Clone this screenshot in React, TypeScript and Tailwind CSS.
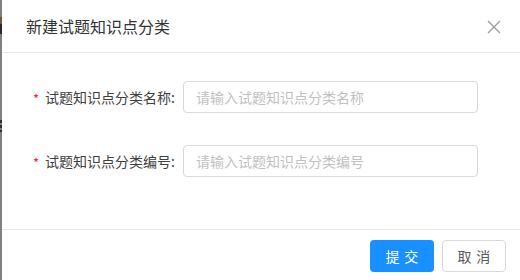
import React from "react";

export default function App() {
  const font = { fontFamily: '"Noto Sans CJK SC", "Microsoft YaHei", sans-serif' };
  return (
    <div
      className="w-[520px] h-[280px] bg-[#808080] flex overflow-hidden"
      style={font}
    >
      <div className="w-[2px] h-full flex flex-col shrink-0">
        <div className="h-[17px]" />
        <div className="h-[7px] bg-[#6b5a3c]" />
        <div className="h-[10px] bg-[#2a2a2a]" />
        <div className="h-[86px]" />
        <div className="h-[3px] bg-[#2b2f3a]" />
        <div className="h-[2px]" />
        <div className="h-[3px] bg-[#2b2f3a]" />
        <div className="h-[2px]" />
        <div className="h-[2px] bg-[#2b2f3a]" />
      </div>
      <div className="flex-1 bg-white flex flex-col">
        <div className="h-[53px] border-b border-[#e8e8e8] flex items-center justify-between pl-[24px] pr-[19px] shrink-0">
          <span className="text-[16px] text-[#333333] leading-none">新建试题知识点分类</span>
          <svg width="14" height="14" viewBox="0 0 14 14" className="mt-[1px]">
            <path d="M1 1 L13 13 M13 1 L1 13" stroke="#9a9a9a" strokeWidth="1.3" fill="none" />
          </svg>
        </div>
        <div className="h-[176px] shrink-0 pt-[28px] flex flex-col gap-[32px]">
          {[
            ["试题知识点分类名称", "请输入试题知识点分类名称"],
            ["试题知识点分类编号", "请输入试题知识点分类编号"],
          ].map(([label, ph]) => (
            <div key={label} className="flex items-center h-[32px]">
              <div className="w-[173px] flex justify-end items-center text-[14px] text-[#404040]">
                <span className="text-[#f5222d] mr-[6px] text-[13px] leading-none mt-[2px]">*</span>
                <span>{label}:</span>
              </div>
              <div className="ml-[8px] w-[295px] h-[32px] border border-[#d9d9d9] rounded-[4px] flex items-center pl-[12px] text-[14px] text-[#bfbfbf]">
                {ph}
              </div>
            </div>
          ))}
        </div>
        <div className="border-t border-[#e8e8e8] flex-1 flex justify-end items-start pt-[10px] pr-[14px] gap-[8px]">
          <button className="w-[64px] h-[32px] rounded-[4px] bg-[#1890ff] text-white text-[14px] tracking-[0.34em] pl-[0.34em]">
            提交
          </button>
          <button className="w-[64px] h-[32px] rounded-[4px] border border-[#d9d9d9] bg-white text-[#595959] text-[14px] tracking-[0.34em] pl-[0.34em]">
            取消
          </button>
        </div>
      </div>
    </div>
  );
}
